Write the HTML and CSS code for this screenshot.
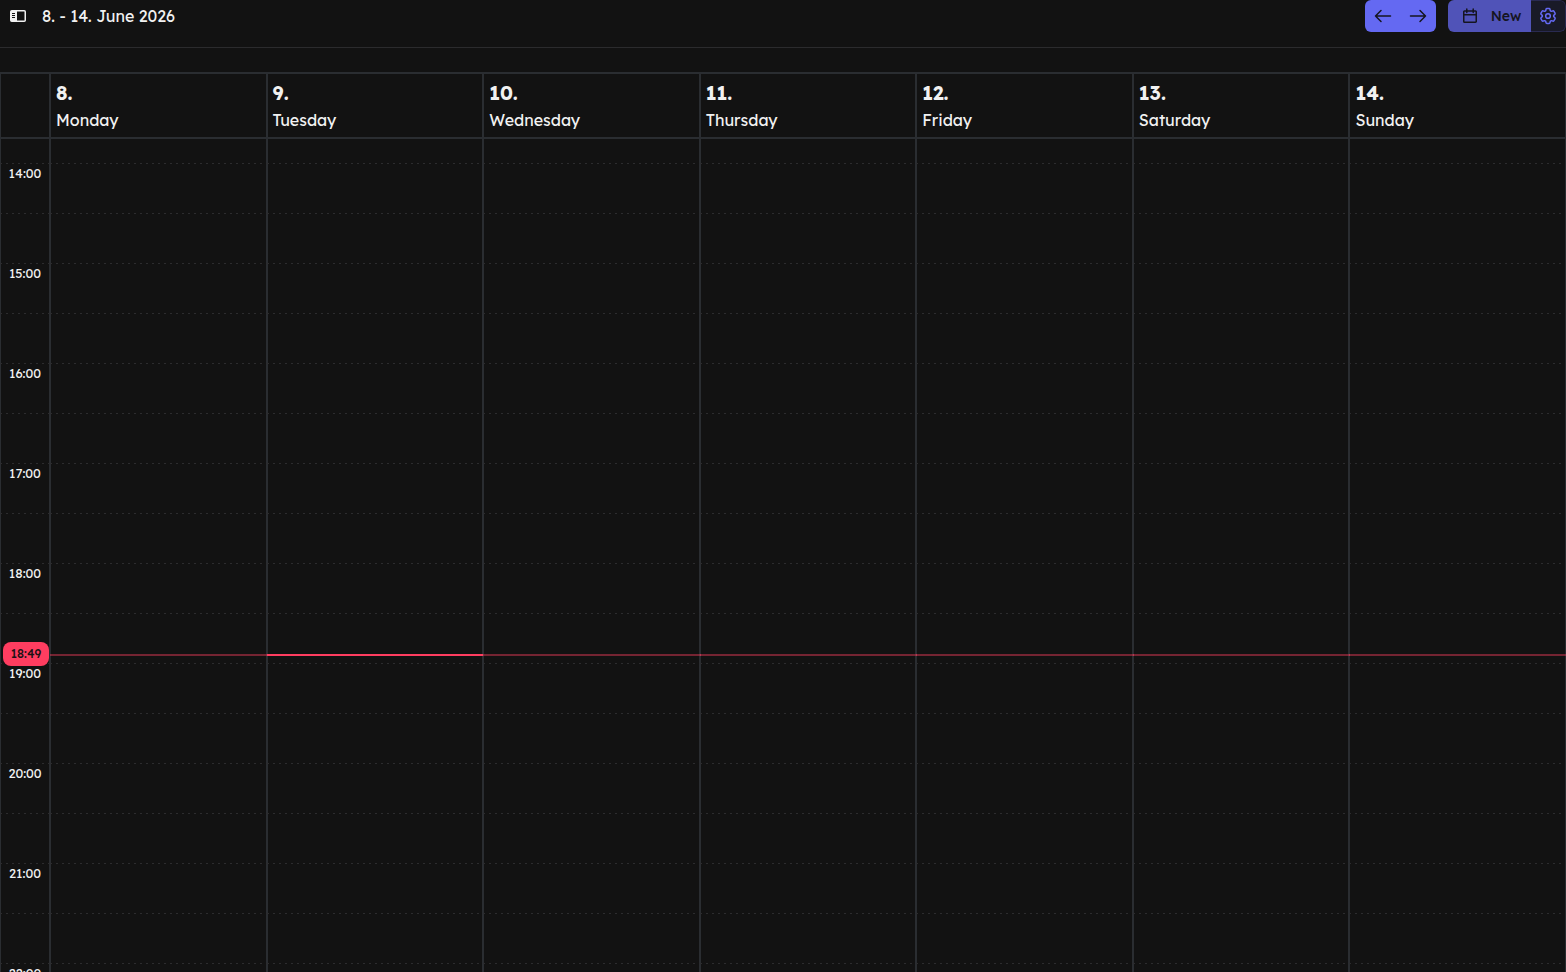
FILE: index.html
```html
<!doctype html>
<html lang="en">
<head>
	<meta charset="utf-8">
	<title>Calendar</title>
	<meta name="viewport" content="width=device-width, initial-scale=1">
	<link rel="stylesheet" href="styles.css">
</head>
<body>
	<header class="toolbar">
		<svg class="sidebar-icon" width="16" height="12" viewBox="0 0 16 12">
			<rect x=".75" y=".75" width="14.5" height="10.5" rx="1" fill="none" stroke="currentColor" stroke-width="1.5"/>
			<path d="M1 1h6v10H1z" fill="currentColor"/>
			<path d="M2 3.5h3M2 5.5h3M2 7.5h3" stroke="#121212"/>
		</svg>
		<h1 class="title">8. - 14. June 2026</h1>
		<div class="button-group nav">
			<button aria-label="Previous week">
				<svg width="18" height="14" viewBox="0 0 18 14"><path d="M16.500 7H1.500M7 1.500 1.500 7 7 12.500"/></svg>
			</button>
			<button aria-label="Next week">
				<svg width="18" height="14" viewBox="0 0 18 14"><path d="M1.500 7h15M11 1.500 16.500 7 11 12.500"/></svg>
			</button>
		</div>
		<div class="button-group create">
			<button class="new">
				<svg width="14" height="16" viewBox="0 0 14 16"><path d="M1.500 3h11a.75.75 0 0 1 .75.75v9.750a.75.75 0 0 1-.75.75h-11a.75.75 0 0 1-.75-.75V3.750A.75.75 0 0 1 1.500 3zM.75 6.800h12.500M3.800 1v3.500M10.200 1v3.500"/></svg>
				<span>New</span>
			</button>
			<button class="settings" aria-label="Settings">
				<svg width="20" height="20" viewBox="0 0 24 24"><path d="M9.594 3.940c.09-.542.56-.94 1.110-.94h2.593c.55 0 1.020.398 1.110.94l.213 1.281c.063.374.313.686.645.87.074.040.147.083.220.127.325.196.720.257 1.075.124l1.217-.456a1.125 1.125 0 0 1 1.370.490l1.296 2.247a1.125 1.125 0 0 1-.26 1.431l-1.003.827c-.293.241-.438.613-.430.992a7.723 7.723 0 0 1 0 .255c-.008.378.137.750.430.991l1.004.827c.424.350.534.955.260 1.430l-1.298 2.247a1.125 1.125 0 0 1-1.369.491l-1.217-.456c-.355-.133-.750-.072-1.076.124a6.470 6.470 0 0 1-.220.128c-.331.183-.581.495-.644.869l-.213 1.281c-.09.543-.560.940-1.110.940h-2.594c-.550 0-1.019-.398-1.110-.940l-.213-1.281c-.062-.374-.312-.686-.644-.870a6.520 6.520 0 0 1-.220-.127c-.325-.196-.720-.257-1.076-.124l-1.217.456a1.125 1.125 0 0 1-1.369-.490l-1.297-2.247a1.125 1.125 0 0 1 .260-1.431l1.004-.827c.292-.240.437-.613.430-.991a6.932 6.932 0 0 1 0-.255c.007-.380-.138-.751-.430-.992l-1.004-.827a1.125 1.125 0 0 1-.260-1.430l1.297-2.247a1.125 1.125 0 0 1 1.370-.491l1.216.456c.356.133.751.072 1.076-.124.072-.044.146-.086.220-.128.332-.183.582-.495.644-.869z"/><circle cx="12" cy="12" r="2.800"/></svg>
			</button>
		</div>
	</header>
	<main class="calendar">
		<div class="row days">
			<div class="cell"></div>
			<div class="cell"><b>8.</b><span>Monday</span></div>
			<div class="cell"><b>9.</b><span>Tuesday</span></div>
			<div class="cell"><b>10.</b><span>Wednesday</span></div>
			<div class="cell"><b>11.</b><span>Thursday</span></div>
			<div class="cell"><b>12.</b><span>Friday</span></div>
			<div class="cell"><b>13.</b><span>Saturday</span></div>
			<div class="cell"><b>14.</b><span>Sunday</span></div>
		</div>
		<div class="row week">
			<div class="col axis">
				<div class="hour">14:00</div>
				<div class="hour">15:00</div>
				<div class="hour">16:00</div>
				<div class="hour">17:00</div>
				<div class="hour">18:00</div>
				<div class="hour">19:00</div>
				<div class="hour">20:00</div>
				<div class="hour">21:00</div>
				<div class="hour">22:00</div>
				<div class="now-label">18:49</div>
			</div>
			<div class="col"><div class="now"></div></div>
			<div class="col today"><div class="now"></div></div>
			<div class="col"><div class="now"></div></div>
			<div class="col"><div class="now"></div></div>
			<div class="col"><div class="now"></div></div>
			<div class="col"><div class="now"></div></div>
			<div class="col"><div class="now"></div></div>
		</div>
	</main>
	<script>
		// half hour lines, 50px apart
		for (const col of document.querySelectorAll('.col')) {
			const slots = document.createElement('div');
			slots.className = 'slots';
			for (let i = 0; i < 17; i++) {
				const slot = document.createElement('div');
				slot.className = 'slot';
				slots.appendChild(slot);
			}
			col.prepend(slots);
		}
	</script>
</body>
</html>
```
FILE: styles.css
```css
:root {
	--background: #121212;
	--line: #2a2d31;
	--text: #f1f1f1;
	--primary: #6469f2;
	--now: #ff3d60;
	font-family: Lexend, Inter, sans-serif;
}
* {
	box-sizing: border-box;
}
body {
	margin: 0;
	height: 100vh;
	display: flex;
	flex-direction: column;
	overflow: hidden;
	background: var(--background);
	color: var(--text);
}

.toolbar {
	display: flex;
	align-items: flex-start;
	height: 48px;
	flex: none;
	padding-left: 10px;
	border-bottom: 1px solid #2b2b2d;
}
.sidebar-icon {
	margin-top: 10px;
}
.title {
	margin: 0 auto 0 16px;
	font-size: 16px;
	font-weight: 400;
	line-height: 32px;
}
.button-group {
	display: flex;
	height: 32px;
	border-radius: 6px;
	overflow: hidden;
}
.button-group button {
	display: flex;
	align-items: center;
	justify-content: center;
	border: none;
	padding: 0;
	color: #15151f;
	background: none;
	font-family: inherit;
}
.button-group svg {
	flex: none;
	fill: none;
	stroke: currentColor;
	stroke-width: 1.5;
	stroke-linecap: round;
	stroke-linejoin: round;
}
.nav {
	width: 71px;
	margin-right: 12px;
	background: var(--primary);
}
.nav button {
	flex: 1;
}
.create {
	width: 118px;
}
.button-group .new {
	width: 83px;
	gap: 14px;
	padding-left: 5px;
	background: #5053b8;
	font-size: 14px;
	font-weight: 500;
}
.button-group .settings {
	width: 35px;
	color: var(--primary);
	background: #191a27;
	border: 1px solid #292a50;
	border-left: none;
	border-radius: 0 6px 6px 0;
}
.settings svg {
	stroke-width: 1.8;
}

.calendar {
	flex: 1;
	display: flex;
	flex-direction: column;
	min-height: 0;
	margin: 24px -1px 0;
	border-top: 2px solid var(--line);
}
.row {
	display: grid;
	grid-template-columns: 52px repeat(7, 1fr);
}
.cell, .col {
	border-right: 2px solid var(--line);
}
.cell:first-child, .col:first-child {
	border-left: 2px solid var(--line);
}
.days {
	height: 65px;
	border-bottom: 2px solid var(--line);
}
.days .cell {
	padding: 6px 5px 0;
}
.days b, .days span {
	display: block;
	line-height: 27px;
}
.days b {
	font-size: 19.2px;
	font-weight: 700;
}
.days span {
	font-size: 16px;
}

.week {
	flex: 1;
	min-height: 0;
	overflow: hidden;
}
.col {
	position: relative;
}
.slots {
	margin: 0 -1px;
	padding-top: 24px;
}
.slot {
	height: 50px;
	background: repeating-linear-gradient(90deg, #2c2c2e 0 2px, transparent 2px 6px) top / 100% 1px no-repeat;
}
.axis .slots {
	position: absolute;
	inset: 0;
}
.axis {
	padding-top: 24px;
}
.hour {
	position: relative;
	height: 100px;
	font-size: 12.8px;
	line-height: 20px;
	text-align: center;
}
.now {
	position: absolute;
	top: 515px;
	left: -1px;
	right: -2px;
	height: 2px;
	background: var(--now);
	opacity: .42;
}
.today .now {
	right: -1px;
	opacity: 1;
}
.now-label {
	position: absolute;
	top: 503px;
	left: 2px;
	width: 46px;
	height: 24px;
	border-radius: 8px;
	background: var(--now);
	color: #1b1214;
	font-size: 12px;
	font-weight: 500;
	line-height: 24px;
	text-align: center;
	z-index: 1;
}
```
